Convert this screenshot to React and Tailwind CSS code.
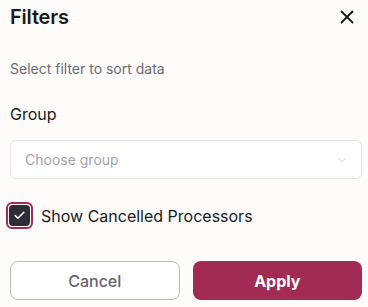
import { useState } from 'react';
import { X, ChevronDown, Check } from 'lucide-react';

export default function App() {
	const [showCancelled, setShowCancelled] = useState(true)

	return (
		<div className="w-[368px] h-[307px] bg-[#fefbfb] pl-[10px] pr-[6px] font-['Inter',sans-serif] text-[#1a1a1a] flex flex-col">
			<div className="flex items-center justify-between h-[34px]">
				<div className="text-[20px] font-semibold leading-none tracking-[-0.2px]">Filters</div>
				<button className="mr-[4px] text-[#1a1a1a]">
					<X size={22} strokeWidth={2} />
				</button>
			</div>
			<div className="mt-[26px] text-[14px] text-[#6b6b72] leading-[17px]">Select filter to sort data</div>
			<div className="mt-[28px] text-[16px] leading-[19px]">Group</div>
			<button className="mt-[16px] h-[39px] w-full rounded-[6px] border border-[#e6e4e6] bg-white flex items-center justify-between pl-[14px] pr-[12px]">
				<span className="text-[14px] text-[#a3a3ab]">Choose group</span>
				<ChevronDown size={14} strokeWidth={1.5} className="text-[#c8c8cc]" />
			</button>
			<label className="mt-[23px] -ml-[4px] flex items-center gap-[8px] cursor-pointer">
				<span
					className="w-[27px] h-[27px] rounded-[6px] border-2 border-[#a12b53] p-[1px] flex"
					onClick={() => setShowCancelled(!showCancelled)}
				>
					<span className="flex-1 rounded-[4px] bg-[#2e2c34] flex items-center justify-center">
						{showCancelled && <Check size={13} strokeWidth={3} className="text-white" />}
					</span>
				</span>
				<span className="text-[16px] text-[#1a1a1a]">Show Cancelled Processors</span>
			</label>
			<div className="mt-[32px] grid grid-cols-2 gap-[13px]">
				<button className="h-[39px] rounded-[8px] border border-[#bcbcbc] bg-white text-[16px] font-medium text-[#65646c]">
					Cancel
				</button>
				<button className="h-[39px] rounded-[8px] bg-[#a12b53] text-[16px] font-bold text-white">
					Apply
				</button>
			</div>
		</div>
	);
}
